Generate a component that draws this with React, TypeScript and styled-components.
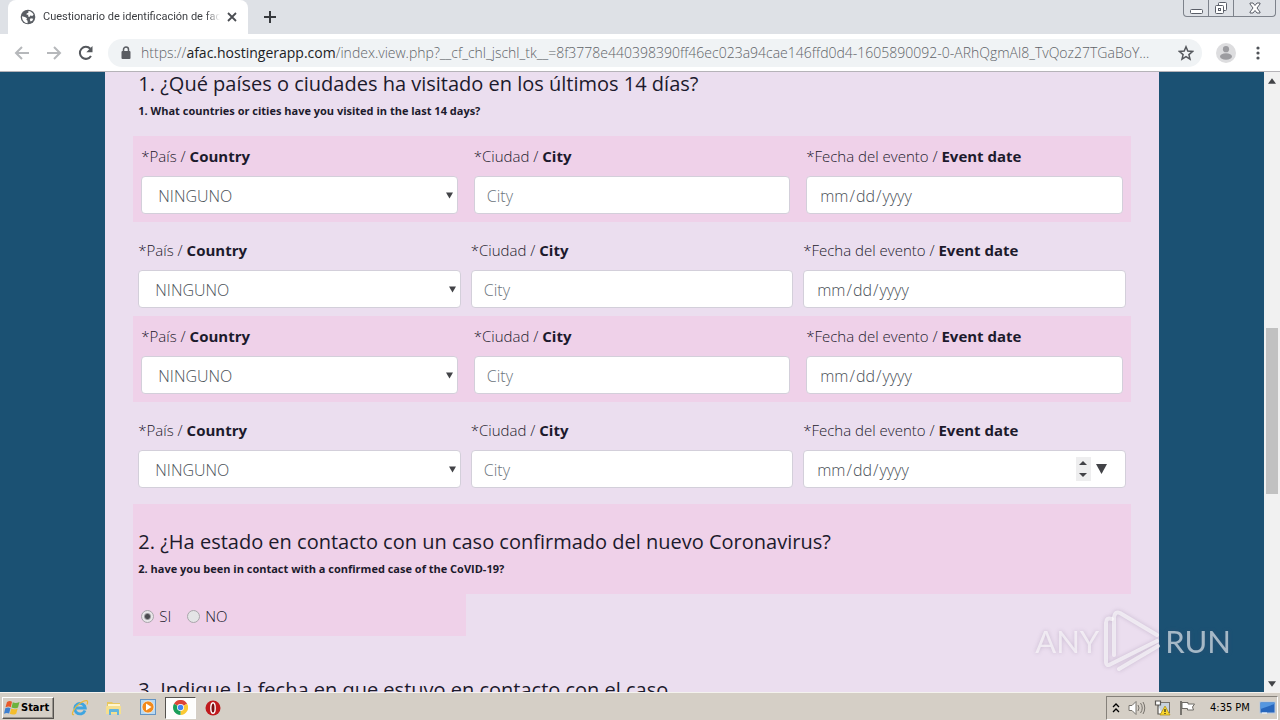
import React from "react";
import styled, { createGlobalStyle, css } from "styled-components";

const Global = createGlobalStyle`
  *, *::before, *::after { box-sizing: border-box; }
  html, body, #root { height: 100%; }
  body { margin: 0; overflow: hidden; font-family: "Open Sans", "Noto Sans", sans-serif; color: #1c1a2c; }
  button, input, select { font-family: inherit; }
  button { padding: 0; border: 0; background: none; }
`;

const Desktop = styled.div`
  display: flex;
  flex-direction: column;
  height: 100%;
  position: relative;
`;

/* Browser window */
const TabStrip = styled.header`
  display: flex;
  align-items: flex-start;
  height: 34px;
  flex: none;
  padding: 0 4px 0 8px;
  background: #dee1e6;
`;
const Tab = styled.div`
  display: flex;
  align-items: center;
  width: 240px;
  height: 34px;
  padding: 0 10px 0 12px;
  background: #fff;
  border-radius: 8px 8px 0 0;
`;
const TabTitle = styled.span`
  flex: 1;
  margin: 0 6px 0 7px;
  overflow: hidden;
  white-space: nowrap;
  font-family: Roboto, sans-serif;
  font-size: 11px;
  line-height: 16px;
  color: #3c3e42;
  mask-image: linear-gradient(to right, #000 92%, transparent);
`;
const IconButton = styled.button<{ $w?: number; $h?: number }>`
  display: flex;
  align-items: center;
  justify-content: center;
  flex: none;
  width: ${(p) => p.$w ?? 16}px;
  height: ${(p) => p.$h ?? 16}px;
`;
const WindowControls = styled.div`
  display: flex;
  margin-left: auto;
  height: 17px;
  border: 1px solid #7d828b;
  border-top: 0;
  border-radius: 0 0 4px 4px;
  & > button + button { border-left: 1px solid #7d828b; }
`;
const Toolbar = styled.nav`
  display: flex;
  align-items: center;
  height: 38px;
  flex: none;
  padding: 0 10px 0 6px;
  background: #fff;
  border-bottom: 1px solid #b5b3b8;
`;
const AddressBar = styled.div`
  display: flex;
  align-items: center;
  flex: 1;
  min-width: 0;
  height: 28px;
  margin: 0 4px 0 6px;
  padding: 0 8px 0 12px;
  border-radius: 14px;
  background: #f0f3f5;
`;
const Url = styled.span`
  flex: 1;
  min-width: 0;
  margin: 0 16px 0 9px;
  overflow: hidden;
  white-space: nowrap;
  text-overflow: ellipsis;
  font-size: 14px;
  line-height: 20px;
  font-weight: 300;
  color: #5f6368;
  b { font-weight: 400; color: #202124; }
`;

/* Page */
const Viewport = styled.div`
  display: flex;
  flex: 1;
  min-height: 0;
`;
const Page = styled.main`
  display: grid;
  grid-template-columns: 1fr 10fr 1fr;
  flex: 1;
  overflow: hidden;
  background: #1b5173;
`;
const Panel = styled.form`
  grid-column: 2;
  min-width: 0;
  padding: 0 28px;
  background: #ebdeef;
`;
const Question = styled.section<{ $tinted?: boolean; $first?: boolean }>`
  padding: ${(p) => (p.$first ? 0 : 26)}px 5px 16px;
  background: ${(p) => (p.$tinted ? "#efd1e9" : "transparent")};
`;
const Title = styled.h2`
  margin: 0 0 6px;
  font-size: 20px;
  line-height: 24px;
  font-weight: 400;
  white-space: nowrap;
`;
const Subtitle = styled.p`
  margin: 0;
  font-size: 11px;
  line-height: 18px;
  font-weight: 700;
`;
const Row = styled.div<{ $tinted?: boolean }>`
  display: grid;
  grid-template-columns: repeat(3, 1fr);
  ${(p) =>
    p.$tinted
      ? css`
          gap: 16px;
          padding: 8px;
          background: #efd1e9;
        `
      : css`
          gap: 10px;
          padding: 16px 5px 8px;
        `}
`;
const Answers = styled.div<{ $space: number }>`
  margin-bottom: ${(p) => p.$space}px;
`;
const Field = styled.div`
  min-width: 0;
`;
const Label = styled.label`
  display: block;
  margin-bottom: 8px;
  font-size: 15px;
  line-height: 24px;
  font-weight: 300;
  b { font-weight: 700; }
`;
const Control = styled.div`
  display: flex;
  align-items: center;
  height: 38px;
  position: relative;
  border: 1px solid #d3cfda;
  border-radius: 4px;
  background: #fff;
`;
const inputText = css`
  flex: 1;
  min-width: 0;
  height: 36px;
  padding: 2px 12px 0;
  border: 0;
  border-radius: 4px;
  outline: 0;
  background: transparent;
  color: #495057;
  font-size: 16px;
  font-weight: 300;
  line-height: 24px;
`;
const TextInput = styled.input`
  ${inputText}
  &::placeholder { color: #6c757d; }
`;
const DateInput = styled.input`
  ${inputText}
  &::-webkit-calendar-picker-indicator { display: none; }
`;
const Select = styled.select`
  ${inputText}
  padding: 2px 16px 0;
  appearance: none;
`;
const SelectArrow = styled.svg`
  position: absolute;
  right: 4px;
  pointer-events: none;
`;
const DateTools = styled.div`
  display: flex;
  align-items: center;
  gap: 5px;
  margin-right: 17px;
`;
const Spinner = styled.button`
  display: flex;
  align-items: center;
  justify-content: center;
  width: 15px;
  height: 24px;
  background: #eeeeef;
`;
const Choices = styled.div`
  display: flex;
  align-items: center;
  gap: 16px;
  width: 33.3333%;
  height: 42px;
  padding: 2px 8px 0;
  background: #efd1e9;
`;
const Choice = styled.label`
  display: flex;
  align-items: center;
  gap: 5px;
  font-size: 15px;
  line-height: 24px;
  font-weight: 300;
`;
const Radio = styled.input`
  appearance: none;
  width: 13px;
  height: 13px;
  margin: 0;
  border: 1px solid #a9a6ab;
  border-radius: 50%;
  background: #e4e4e6;
  &:checked { background: radial-gradient(circle, #4a4a4e 0 2px, #e8e6e9 4px); }
`;
const Scrollbar = styled.div`
  display: flex;
  flex-direction: column;
  align-items: center;
  width: 16px;
  flex: none;
  background: #f1f1f1;
`;
const Thumb = styled.div`
  flex: 166;
  width: 12px;
  background: #c1c1c1;
`;
const Gap = styled.div<{ $grow: number }>`
  flex: ${(p) => p.$grow};
`;
const Watermark = styled.div`
  position: absolute;
  right: 49px;
  bottom: 47px;
  display: flex;
  align-items: center;
  gap: 4px;
  color: rgba(255, 255, 255, 0.6);
  font-family: Lato, sans-serif;
  font-size: 31px;
  line-height: 64px;
  filter: drop-shadow(0 0 2px rgba(90, 70, 110, 0.4));
  pointer-events: none;
`;

/* Taskbar */
const Taskbar = styled.footer`
  display: flex;
  align-items: center;
  height: 28px;
  flex: none;
  padding: 2px 2px 0;
  background: #d5cfc6;
  border-top: 1px solid #f4f2ee;
  font-family: "DejaVu Sans Condensed", "DejaVu Sans", sans-serif;
  color: #000;
`;
const StartButton = styled.button`
  display: flex;
  align-items: center;
  gap: 1px;
  width: 52px;
  height: 22px;
  padding-left: 1px;
  border: 1px solid;
  border-color: #fff #55524e #55524e #fff;
  box-shadow: inset -1px -1px #99958e;
  background: #d5cfc6;
  font-family: inherit;
  font-size: 11px;
  font-weight: 700;
`;
const Launchers = styled.div`
  display: flex;
  align-items: center;
  margin-left: 9px;
`;
const Launcher = styled.button<{ $active?: boolean }>`
  display: flex;
  align-items: center;
  justify-content: center;
  width: 34px;
  height: 22px;
  ${(p) =>
    p.$active &&
    css`
      width: 31px;
      background: #fdfdfc;
      border: 1px solid;
      border-color: #55524e #fff #fff #55524e;
    `}
`;
const Tray = styled.div`
  display: flex;
  align-items: center;
  gap: 8px;
  margin-left: auto;
  height: 24px;
  padding: 0 1px 0 5px;
  border: 1px solid;
  border-color: #85817a #fff #fff #85817a;
`;
const Clock = styled.time`
  width: 41px;
  margin-left: 6px;
  font-size: 11px;
  line-height: 16px;
  white-space: nowrap;
`;

const Globe = () => (
  <svg width="16" height="16" viewBox="0 0 16 16">
    <circle cx="8" cy="8" r="7.3" fill="#5a5e64" />
    <path d="M2 7.200 5 8l2 1.200-.6 1.600 1.200 1v2.400C4.600 14 2 11.500 2 7.200ZM8.400 2c2.300.2 4.300 1.600 5.200 3.700L12 7.300l-1.200-1L9.300 8 8 7.200l.4-1.400H6.600V4.400l1.800-.6V2Zm2.300 7.300 2.600.4-1 2-1.700.7-.8-1.600.9-1.500Z" fill="#fff" />
  </svg>
);
const Arrow = ({ flip }: { flip?: boolean }) => (
  <svg width="16" height="16" viewBox="0 0 16 16" fill="none" stroke="#b6b8bb" strokeWidth="2">
    <path d={flip ? "M1 8h13M8 2l6 6-6 6" : "M15 8H2M8 2 2 8l6 6"} />
  </svg>
);
const ScrollArrow = ({ up }: { up?: boolean }) => (
  <svg width="8" height="8" viewBox="0 0 6 6">
    <path d={up ? "M0 5h6L3 1Z" : "M0 1h6L3 5Z"} fill="#424347" />
  </svg>
);

function EventRow({ n, tinted, tools }: { n: number; tinted?: boolean; tools?: boolean }) {
  return (
    <Row $tinted={tinted}>
      <Field>
        <Label htmlFor={`country${n}`}>*País / <b>Country</b></Label>
        <Control>
          <Select id={`country${n}`}><option>NINGUNO</option></Select>
          <SelectArrow width="7" height="7" viewBox="0 0 7 7"><path d="M0 .5h7L3.500 6.500Z" fill="#424347" /></SelectArrow>
        </Control>
      </Field>
      <Field>
        <Label htmlFor={`city${n}`}>*Ciudad / <b>City</b></Label>
        <Control><TextInput id={`city${n}`} placeholder="City" /></Control>
      </Field>
      <Field>
        <Label htmlFor={`date${n}`}>*Fecha del evento / <b>Event date</b></Label>
        <Control>
          <DateInput id={`date${n}`} type="date" />
          {tools && (
            <DateTools>
              <Spinner type="button" aria-label="Step date">
                <svg width="8" height="16" viewBox="0 0 8 16" fill="#424347"><path d="M0 4h8L4 0ZM0 12h8l-4 4Z" /></svg>
              </Spinner>
              <IconButton type="button" $w={12} aria-label="Open calendar">
                <svg width="11" height="10" viewBox="0 0 11 10"><path d="M0 0h11L5.500 10Z" fill="#424347" /></svg>
              </IconButton>
            </DateTools>
          )}
        </Control>
      </Field>
    </Row>
  );
}

export default function App() {
  return (
    <>
      <Global />
      <Desktop>
        <TabStrip>
          <Tab>
            <Globe />
            <TabTitle>Cuestionario de identificación de fact</TabTitle>
            <IconButton aria-label="Close tab" $w={12}>
              <svg width="10" height="10" viewBox="0 0 10 10" stroke="#4a4d52" strokeWidth="1.800"><path d="m1 1 8 8M9 1 1 9" /></svg>
            </IconButton>
          </Tab>
          <IconButton aria-label="New tab" $w={44} $h={34}>
            <svg width="12" height="12" viewBox="0 0 12 12" stroke="#36393d" strokeWidth="2"><path d="M6 0v12M0 6h12" /></svg>
          </IconButton>
          <WindowControls>
            <IconButton aria-label="Minimize" $w={24}>
              <svg width="13" height="14" viewBox="0 0 13 14"><rect x=".5" y="8.500" width="12" height="4" rx="1" fill="#fff" stroke="#5a5e68" /></svg>
            </IconButton>
            <IconButton aria-label="Restore" $w={25}>
              <svg width="14" height="14" viewBox="0 0 14 14" fill="#fff" stroke="#5a5e68"><rect x="4.500" y="1.500" width="8" height="8" rx="1" /><rect x="1.500" y="4.500" width="8" height="8" rx="1" /><rect x="4.500" y="7.500" width="2" height="2" /></svg>
            </IconButton>
            <IconButton aria-label="Close" $w={42}>
              <svg width="12" height="12" viewBox="0 0 12 12" fill="#fff" stroke="#5a5e68"><path d="M1 1h3l2 2.500L8 1h3v1L8 6l3 4v1H8L6 8.500 4 11H1v-1l3-4-3-4Z" /></svg>
            </IconButton>
          </WindowControls>
        </TabStrip>
        <Toolbar>
          <IconButton aria-label="Back" $w={32}><Arrow /></IconButton>
          <IconButton aria-label="Forward" $w={32}><Arrow flip /></IconButton>
          <IconButton aria-label="Reload" $w={32}>
            <svg width="16" height="16" viewBox="0 0 16 16"><path d="M13 11A6 6 0 1 1 12.300 3.800" fill="none" stroke="#55585d" strokeWidth="2" /><path d="M14.500 1v6.200H8.300Z" fill="#55585d" /></svg>
          </IconButton>
          <AddressBar>
            <svg width="12" height="14" viewBox="0 0 12 14"><rect x="1.500" y="5" width="9" height="8" rx="1" fill="#5a5d62" /><path d="M3.500 6V3.500a2.500 2.500 0 0 1 5 0V6" fill="none" stroke="#5a5d62" strokeWidth="1.500" /></svg>
            <Url>https://<b>afac.hostingerapp.com</b>/index.view.php?__cf_chl_jschl_tk__=8f3778e440398390ff46ec023a94cae146ffd0d4-1605890092-0-ARhQgmAl8_TvQoz27TGaBoY…</Url>
            <IconButton aria-label="Bookmark">
              <svg width="16" height="16" viewBox="0 0 16 16" fill="none" stroke="#55585d" strokeWidth="1.500"><path d="m8 1.800 1.800 4.300 4.700.4-3.600 3.100 1.100 4.600L8 11.700l-4 2.500 1.100-4.600-3.600-3.100 4.700-.4Z" /></svg>
            </IconButton>
          </AddressBar>
          <IconButton aria-label="Profile" $w={40} $h={22}>
            <svg width="20" height="20" viewBox="0 0 20 20"><circle cx="10" cy="10" r="10" fill="#dddddf" /><circle cx="10" cy="6.200" r="3.100" fill="#9c9ca0" /><ellipse cx="10" cy="13.500" rx="6" ry="3.200" fill="#9c9ca0" /></svg>
          </IconButton>
          <IconButton aria-label="Menu" $w={24}>
            <svg width="4" height="14" viewBox="0 0 4 14" fill="#505358"><circle cx="2" cy="2" r="1.600" /><circle cx="2" cy="7" r="1.600" /><circle cx="2" cy="12" r="1.600" /></svg>
          </IconButton>
        </Toolbar>

        <Viewport>
          <Page>
            <Panel>
              <Question $first>
                <Title>1. ¿Qué países o ciudades ha visitado en los últimos 14 días?</Title>
                <Subtitle>1. What countries or cities have you visited in the last 14 days?</Subtitle>
              </Question>
              <Answers $space={8}>
                <EventRow n={1} tinted />
                <EventRow n={2} />
                <EventRow n={3} tinted />
                <EventRow n={4} tools />
              </Answers>
              <Question $tinted>
                <Title>2. ¿Ha estado en contacto con un caso confirmado del nuevo Coronavirus?</Title>
                <Subtitle>2. have you been in contact with a confirmed case of the CoVID-19?</Subtitle>
              </Question>
              <Answers $space={16}>
                <Choices>
                  <Choice><Radio type="radio" name="contact" defaultChecked />SI</Choice>
                  <Choice><Radio type="radio" name="contact" />NO</Choice>
                </Choices>
              </Answers>
              <Question>
                <Title>3. Indique la fecha en que estuvo en contacto con el caso</Title>
              </Question>
            </Panel>
          </Page>
          <Scrollbar>
            <IconButton aria-label="Scroll up" $h={17}><ScrollArrow up /></IconButton>
            <Gap $grow={239} />
            <Thumb />
            <Gap $grow={181} />
            <IconButton aria-label="Scroll down" $h={17}><ScrollArrow /></IconButton>
          </Scrollbar>
        </Viewport>

        <Taskbar>
          <StartButton>
            <svg width="16" height="16" viewBox="0 0 16 16"><path d="M3 2c2-1.500 3.500-1.300 5-.3L6.800 7.200C5.300 6.200 3.800 6.200 1.500 7.300Z" fill="#e8592b" /><path d="M8.800 2.200c1.800 1 4 1 6.700-.2L14 7.400c-2 1.100-4.300 1.100-6.500.1Z" fill="#6db33f" /><path d="M1.300 8.300c2-1.100 3.600-1.100 5.200-.1l-1.400 5.400C3.600 12.600 2 12.700 0 13.700Z" fill="#3d7fd0" /><path d="M7.300 8.500c1.800 1 4 1 6.400-.1l-1.500 5.300c-2 1.200-4.300 1.100-6.300.1Z" fill="#f4bd2b" /></svg>
            Start
          </StartButton>
          <Launchers>
            <Launcher aria-label="Internet Explorer">
              <svg width="18" height="18" viewBox="0 0 18 18" fill="none"><path d="M14 11.500A5.300 5.300 0 1 1 14.300 9H5" stroke="#3fa5e0" strokeWidth="2.800" /><path d="M3 15.500C-1 17 3 8 10 3.500 15 .5 18 1 16 5.500" stroke="#e9b93b" strokeWidth="1.200" /></svg>
            </Launcher>
            <Launcher aria-label="Explorer">
              <svg width="18" height="18" viewBox="0 0 18 18"><path d="M2 3h5l1 1h7v10H2Z" fill="#e8c860" /><path d="M3 5h12v3H3Z" fill="#fff6cf" /><path d="M1 7h15v8H1Z" fill="#f5df8e" /><path d="M4 16v-5q0-1 1-1h8q1 0 1 1v5h-2v-3H6v3Z" fill="#63b5dd" /></svg>
            </Launcher>
            <Launcher aria-label="Media Player">
              <svg width="17" height="17" viewBox="0 0 17 17"><rect x=".5" y=".5" width="15" height="15" fill="#b8d9f2" stroke="#6394c4" /><circle cx="8" cy="8" r="6" fill="#f28a1c" stroke="#fff" strokeWidth=".6" /><path d="M6 4.500 11.500 8 6 11.500Z" fill="#fff" /></svg>
            </Launcher>
            <Launcher $active aria-label="Chrome">
              <svg width="15" height="15" viewBox="0 0 16 16"><path d="M8 8 1.100 4A8 8 0 0 1 15 4Z" fill="#dc4437" /><path d="M8 8 15 4A8 8 0 0 1 8 16Z" fill="#fbc933" /><path d="M8 8v8A8 8 0 0 1 1.100 4Z" fill="#1a9f5a" /><circle cx="8" cy="8" r="3.700" fill="#fff" /><circle cx="8" cy="8" r="2.900" fill="#4285f4" /></svg>
            </Launcher>
            <Launcher aria-label="Opera">
              <svg width="16" height="16" viewBox="0 0 16 16"><circle cx="8" cy="8" r="7.500" fill="#c01a1d" /><ellipse cx="8" cy="8" rx="2.200" ry="5.300" fill="#7a0d10" stroke="#fff" strokeWidth="1.400" /></svg>
            </Launcher>
          </Launchers>
          <Tray>
            <svg width="8" height="10" viewBox="0 0 8 10" fill="none" stroke="#000" strokeWidth="1.300"><path d="m1 4 3-3 3 3M1 9l3-3 3 3" /></svg>
            <svg width="18" height="16" viewBox="0 0 18 16" fill="#fff" stroke="#77736d"><path d="M1 5.500h3l4-4v13l-4-4H1Z" /><path d="M10 5q2 3 0 6M12.500 3q3.500 5 0 10M15 2q3.500 6 0 12" fill="none" /></svg>
            <svg width="17" height="16" viewBox="0 0 17 16"><rect x="4.500" y="2.500" width="11" height="10" fill="#c7d2dc" stroke="#77736d" /><path d="M1.500 1h5v4h-5ZM4 5v9h4" fill="#fff" stroke="#5b5854" strokeWidth="1.200" /><path d="m11 6 5 9H6Z" fill="#fbd72c" stroke="#a98a10" strokeWidth=".7" /><path d="M11 9v3M11 13v1" stroke="#222" strokeWidth="1.200" /></svg>
            <svg width="17" height="16" viewBox="0 0 17 16" fill="#fff" stroke="#6d6a65"><path d="M2 1v14" strokeWidth="1.800" /><path d="M3 2.500h6v1.500h6.500l-2 3 1 3H8.500V8.500H3Z" /></svg>
            <Clock>4:35 PM</Clock>
            <svg width="17" height="14" viewBox="0 0 17 14"><rect x="1" y="1" width="15" height="11" fill="#2867bd" stroke="#b7c9e0" /><path d="M1.500 8 15.500 3V1.500h-14Z" fill="#5597e0" /><path d="M3 12h5" stroke="#fff" /></svg>
          </Tray>
        </Taskbar>

        <Watermark aria-hidden="true">
          <span>ANY</span>
          <svg width="58" height="62" viewBox="0 0 58 62" fill="none" stroke="currentColor" strokeWidth="4" strokeLinecap="round" strokeLinejoin="round">
            <path d="M9 9Q3 7 3 13V51Q3 57 8 54L54 31" />
            <path d="M11 45V7Q12 1 17 3L54 25" />
            <path d="M16 59 55 36" />
          </svg>
          <span>RUN</span>
        </Watermark>
      </Desktop>
    </>
  );
}
